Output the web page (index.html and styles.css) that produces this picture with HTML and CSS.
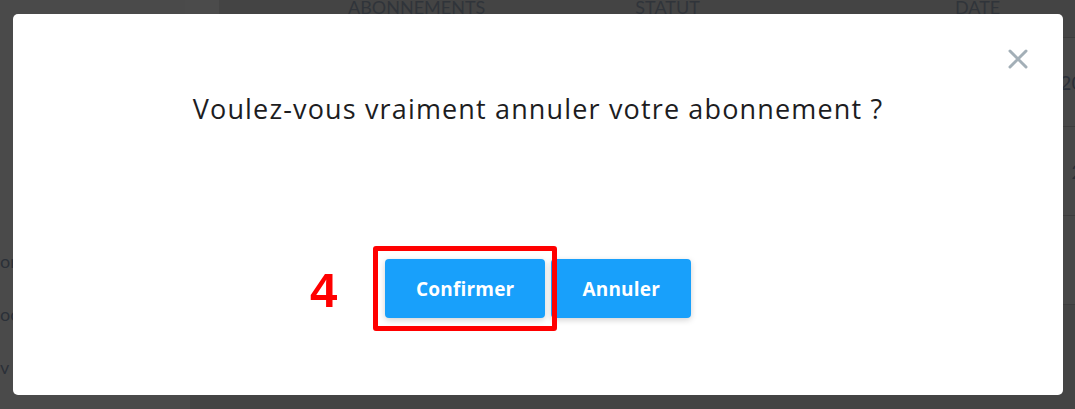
FILE: index.html
```html
<!DOCTYPE html>
<html lang="fr">
<head>
<meta charset="utf-8">
<title>Annuler l'abonnement</title>
<link rel="stylesheet" href="styles.css">
</head>
<body>
<div class="page">
  <aside class="sidebar">
    <div class="sidebar-top"></div>
    <ul class="nav">
      <li>or</li>
      <li>oc</li>
      <li>v</li>
    </ul>
  </aside>
  <main class="main">
    <div class="toggle"></div>
    <div class="table">
      <div class="thead">
        <span class="col c1">ABONNEMENTS</span>
        <span class="col c2">STATUT</span>
        <span class="col c3">DATE</span>
      </div>
      <div class="row"><span class="cell-date">20</span></div>
      <div class="row"><span class="cell-date">2</span></div>
      <div class="row"></div>
    </div>
  </main>
</div>

<div class="overlay">
  <div class="modal">
    <button class="close" aria-label="Fermer">
      <svg width="20" height="20" viewBox="0 0 20 20"><path d="M2 2 L18 18 M18 2 L2 18" stroke="#a3afb7" stroke-width="3" stroke-linecap="round" fill="none"/></svg>
    </button>
    <h2 class="title">Voulez-vous vraiment annuler votre abonnement ?</h2>
    <div class="actions">
      <div class="highlight">
        <span class="step">4</span>
        <button class="btn">Confirmer</button>
      </div>
      <button class="btn">Annuler</button>
    </div>
  </div>
</div>
</body>
</html>
```

FILE: styles.css
```css
* { box-sizing: border-box; }
html, body { margin: 0; padding: 0; }
body {
  width: 1075px;
  height: 409px;
  overflow: hidden;
  background: #434343;
  font-family: "Open Sans", "Liberation Sans", sans-serif;
  position: relative;
}
.page {
  display: flex;
  height: 409px;
}
.sidebar {
  width: 190px;
  flex: none;
  background: #4a4a4a;
  display: flex;
  flex-direction: column;
}
.sidebar-top { height: 252px; }
.nav {
  list-style: none;
  margin: 0;
  padding: 16px 0 0;
  color: #2b3038;
  font-size: 18px;
  font-family: "Lato", sans-serif;
  white-space: nowrap;
}
.nav li { height: 53px; }
.main {
  flex: 1;
  display: flex;
  background: #444444;
}
.toggle {
  width: 34px;
  height: 40px;
  background: #4b4b4b;
  margin-left: -5px;
}
.table { flex: 1; display: flex; flex-direction: column; }
.thead {
  height: 38px;
  display: flex;
  align-items: flex-start;
  border-bottom: 1px solid #3c3c3c;
  color: #30343a;
  font-family: "Lato", sans-serif;
  font-size: 18px;
  line-height: 14px;
}
.col { display: block; }
.c1 { margin-left: 129px; }
.c2 { margin-left: 150px; }
.c3 { margin-left: 255px; }
.row {
  height: 89px;
  border-bottom: 1px solid #3d3d3d;
  display: flex;
  align-items: center;
  justify-content: flex-end;
  color: #2b3038;
  font-family: "Lato", sans-serif;
  font-size: 20px;
  background: #484848;
}
.cell-date { margin-right: -8px; }

.overlay {
  position: absolute;
  inset: 0;
}
.modal {
  position: absolute;
  left: 13px;
  top: 14px;
  width: 1050px;
  height: 381px;
  background: #ffffff;
  border-radius: 5px;
  display: flex;
  flex-direction: column;
  align-items: center;
}
.close {
  position: absolute;
  top: 35px;
  right: 35px;
  width: 20px;
  height: 20px;
  padding: 0;
  border: 0;
  background: none;
  display: flex;
}
.title {
  margin: 78px 0 0;
  font-weight: 400;
  font-size: 27px;
  line-height: 34px;
  color: #1d1d1f;
  letter-spacing: 1.15px;
}
.actions {
  margin-top: 133px;
  display: flex;
  gap: 6px;
}
.highlight { position: relative; display: flex; }
.highlight::after {
  content: "";
  position: absolute;
  left: -12px;
  right: -12px;
  top: -13px;
  bottom: -13px;
  border: 5px solid #ff0000;
  border-radius: 3px;
}
.step {
  position: absolute;
  left: -75px;
  top: 6px;
  font-family: "Liberation Sans", sans-serif;
  font-weight: 700;
  font-size: 49px;
  line-height: 50px;
  color: #ff0000;
}
.btn {
  height: 59px;
  padding: 0 31px;
  border: 0;
  border-radius: 4px;
  background: #18a0fb;
  color: #ffffff;
  font-family: "Open Sans", sans-serif;
  font-weight: 700;
  font-size: 19px;
  letter-spacing: 0.2px;
  box-shadow: 0 2px 6px rgba(0, 0, 0, 0.18);
}
```
